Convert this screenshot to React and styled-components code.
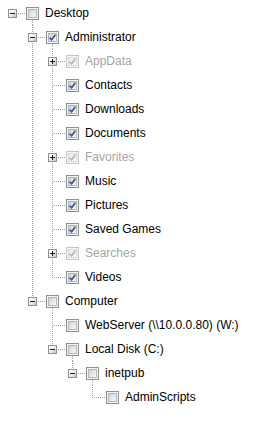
import React from "react";
import styled, { createGlobalStyle } from "styled-components";

const GlobalStyle = createGlobalStyle`
  body {
    margin: 0;
    background: #fff;
  }
`;

const DOT = "#a0a0a0";
const vLine = (x, y, h) =>
  `repeating-linear-gradient(to bottom, ${DOT} 0 1px, transparent 1px 2px) ${x}px ${y}px / 1px ${h}px no-repeat`;
const hLine = (x, y, w) =>
  `repeating-linear-gradient(to right, ${DOT} 0 1px, transparent 1px 2px) ${x}px ${y}px / ${w}px 1px no-repeat`;

const tree = [
  {
    label: "Desktop",
    open: true,
    children: [
      {
        label: "Administrator",
        open: true,
        checked: true,
        children: [
          { label: "AppData", checked: true, disabled: true, children: [{ label: "Local" }] },
          { label: "Contacts", checked: true },
          { label: "Downloads", checked: true },
          { label: "Documents", checked: true },
          { label: "Favorites", checked: true, disabled: true, children: [{ label: "Links" }] },
          { label: "Music", checked: true },
          { label: "Pictures", checked: true },
          { label: "Saved Games", checked: true },
          { label: "Searches", checked: true, disabled: true, children: [{ label: "Everywhere" }] },
          { label: "Videos", checked: true },
        ],
      },
      {
        label: "Computer",
        open: true,
        children: [
          { label: "WebServer (\\\\10.0.0.80) (W:)" },
          {
            label: "Local Disk (C:)",
            open: true,
            children: [
              {
                label: "inetpub",
                open: true,
                children: [{ label: "AdminScripts" }],
              },
            ],
          },
        ],
      },
    ],
  },
];

function flatten(nodes, depth, guides, out, path) {
  nodes.forEach((node, i) => {
    const hasNext = i < nodes.length - 1;
    const key = path + "/" + node.label;
    out.push({ ...node, depth, guides, hasNext, hasPrev: i > 0, key });
    if (node.children && node.open) {
      flatten(node.children, depth + 1, [...guides, hasNext], out, key);
    }
  });
  return out;
}

const Tree = styled.div`
  display: flex;
  flex-direction: column;
  padding: 1px 0 0 2px;
  font-family: "Liberation Sans", Arial, sans-serif;
  font-size: 12px;
`;

const Row = styled.div`
  display: flex;
  align-items: center;
  height: 24px;
`;

const Guide = styled.span`
  flex: none;
  width: 20px;
  height: 24px;
  background: ${(p) => (p.$line ? vLine(10, 0, 24) : "none")};
`;

const Connector = styled.span`
  flex: none;
  display: flex;
  align-items: center;
  width: 24px;
  height: 24px;
  background: ${(p) =>
    [
      p.$top && vLine(10, 0, 12),
      p.$bottom && vLine(10, 12, 12),
      hLine(10, 12, 14),
    ]
      .filter(Boolean)
      .join(", ")};
`;

const Expander = styled.span`
  box-sizing: border-box;
  width: 9px;
  height: 9px;
  margin-left: 6px;
  margin-top: 1px;
  border: 1px solid #919191;
  background: linear-gradient(135deg, #ffffff 0%, #f0f0f0 45%, #c4c4c4 100%);
  display: grid;
  place-items: center;
`;

const CheckCell = styled.span`
  flex: none;
  display: flex;
  align-items: center;
  width: 13px;
  height: 24px;
  background: ${(p) => (p.$stem ? vLine(6, 19, 5) : "none")};
`;

const Box = styled.span`
  box-sizing: border-box;
  width: 13px;
  height: 13px;
  margin-top: 1px;
  padding: 1px;
  border: 1px solid ${(p) => (p.$disabled ? "#c6c6c6" : "#8e8f8f")};
  background: #f4f4f4;
  display: flex;
`;

const BoxInner = styled.span`
  flex: 1;
  display: grid;
  place-items: center;
  border: 1px solid ${(p) => (p.$disabled ? "#dcdcdc" : "#b3b6ba")};
  background: ${(p) =>
    p.$disabled
      ? "linear-gradient(135deg, #ececec, #fbfbfb)"
      : "linear-gradient(135deg, #cfd2d6, #f8f8f8)"};
`;

const Label = styled.span`
  margin-left: 6px;
  white-space: nowrap;
  color: ${(p) => (p.$disabled ? "#a5a5a5" : "#000")};
`;

function Glyph({ open }) {
  return (
    <svg width="5" height="5" viewBox="0 0 5 5" shapeRendering="crispEdges">
      <rect x="0" y="2" width="5" height="1" fill="#1e1e1e" />
      {!open && <rect x="2" y="0" width="1" height="5" fill="#1e1e1e" />}
    </svg>
  );
}

function Check({ disabled }) {
  return (
    <svg width="7" height="7" viewBox="0 0 7 7">
      <path
        d="M0.6 3.6 L2.6 5.8 L6.4 0.8"
        fill="none"
        stroke={disabled ? "#b4b4b4" : "#3d528c"}
        strokeWidth="1.6"
      />
    </svg>
  );
}

export default function App() {
  const rows = flatten(tree, 0, [], [], "");
  return (
    <>
      <GlobalStyle />
      <Tree>
        {rows.map((r) => {
          const hasKids = !!r.children;
          return (
            <Row key={r.key}>
              {r.guides.map((g, i) => (
                <Guide key={i} $line={g} />
              ))}
              <Connector $top={r.depth > 0 || r.hasPrev} $bottom={r.hasNext}>
                {hasKids && (
                  <Expander>
                    <Glyph open={r.open} />
                  </Expander>
                )}
              </Connector>
              <CheckCell $stem={hasKids && r.open}>
                <Box $disabled={r.disabled}>
                  <BoxInner $disabled={r.disabled}>
                    {r.checked && <Check disabled={r.disabled} />}
                  </BoxInner>
                </Box>
              </CheckCell>
              <Label $disabled={r.disabled}>{r.label}</Label>
            </Row>
          );
        })}
      </Tree>
    </>
  );
}
